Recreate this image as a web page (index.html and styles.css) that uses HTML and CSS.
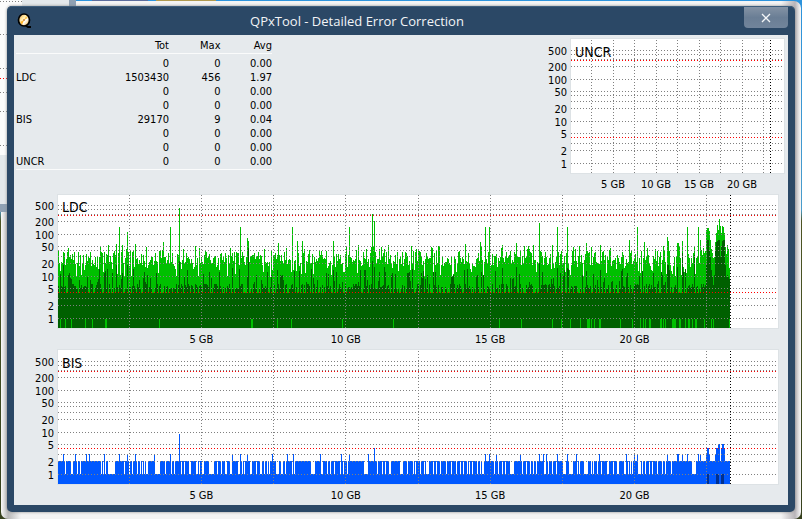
FILE: index.html
```
<!DOCTYPE html>
<html lang="en">
<head>
<meta charset="utf-8">
<title>QPxTool - Detailed Error Correction</title>
<link rel="stylesheet" href="styles.css">
</head>
<body>
<div class="backdrop" aria-hidden="true">
  <svg width="100%" height="212">
    <rect class="white" x="0" y="0" width="8" height="155"/>
    <rect class="white" x="0" y="0" width="23" height="7"/>
    <path class="back-grid" d="M0 1.5H22M0 34.5H8M0 68.5H8M0 92.5H8M0 111.5H8M0 145.5H8"/>
    <path class="back-limit" d="M0 78.5H8"/>
    <rect class="panel" x="22" y="0" width="47" height="7"/>
    <rect class="panel" x="0" y="155" width="8" height="49"/>
    <rect class="edge" x="69" y="0" width="7" height="7"/>
    <rect class="edge" x="0" y="204" width="8" height="8"/>
    <rect fill="#5c6c9c" x="92" y="0" width="56" height="1"/>
    <rect fill="#b09a50" x="156" y="0" width="60" height="1"/>
  </svg>
</div>
<div class="halo">
<main class="window">
  <header class="titlebar">
    <svg class="logo" width="16" height="16" viewBox="0 0 16 16" role="img" aria-label="QPxTool">
      <defs><linearGradient id="disc" x1="0" y1="0" x2="1" y2="1"><stop offset="0" stop-color="#d98a3c"/><stop offset=".35" stop-color="#ffe9a0"/><stop offset=".6" stop-color="#ffffff"/><stop offset="1" stop-color="#f2a000"/></linearGradient></defs>
      <path d="M8 12 L11 14 L14 14" fill="none" stroke="#000" stroke-width="2"/>
      <ellipse cx="7" cy="7" rx="5.500" ry="6" fill="url(#disc)" stroke="#000" stroke-width="1.700"/>
      <path d="M7 7 L3 9 L5 12 Z" fill="#ffb52c"/>
      <path d="M7 7 L9 3 L11 5 Z" fill="#ffc850"/>
      <circle cx="7" cy="7" r="1" fill="#cf8a48"/>
    </svg>
    <h1>QPxTool - Detailed Error Correction</h1>
    <button class="close" type="button" aria-label="Close"><svg width="10" height="10" viewBox="0 0 10 10"><path d="M1 1 L9 9 M9 1 L1 9" fill="none" stroke="#f4f6f8" stroke-width="1.300"/></svg></button>
  </header>
  <div class="client">
    <div class="summary">
      <table>
        <thead><tr><th class="name"></th><th>Tot</th><th>Max</th><th>Avg</th></tr></thead>
        <tbody>
          <tr><td></td><td>0</td><td>0</td><td>0.00</td></tr>
          <tr><td>LDC</td><td>1503430</td><td>456</td><td>1.97</td></tr>
          <tr><td></td><td>0</td><td>0</td><td>0.00</td></tr>
          <tr><td></td><td>0</td><td>0</td><td>0.00</td></tr>
          <tr><td>BIS</td><td>29170</td><td>9</td><td>0.04</td></tr>
          <tr><td></td><td>0</td><td>0</td><td>0.00</td></tr>
          <tr><td></td><td>0</td><td>0</td><td>0.00</td></tr>
          <tr><td>UNCR</td><td>0</td><td>0</td><td>0.00</td></tr>
        </tbody>
      </table>
      <section class="chart small" data-name="UNCR"></section>
    </div>
    <section class="chart" data-name="LDC"></section>
    <section class="chart" data-name="BIS"></section>
  </div>
</main>
</div>
<script src="charts.js"></script>
</body>
</html>
```
FILE: styles.css
```
* { box-sizing: border-box; }
body {
  margin: 0;
  min-height: 100vh;
  padding: 1px 1px 0 1px;
  background: linear-gradient(#2c93dc 0, #4a9cca 210px, #4d5423 221px, #414d22 360px, #36401d 100%);
  font-family: "DejaVu Sans Condensed", "Noto Sans", sans-serif;
  font-size: 11px;
  line-height: 14px;
  color: #000;
}
.backdrop { position: absolute; inset: 0 0 auto 0; z-index: 2; height: 212px; pointer-events: none; }
.backdrop svg { display: block; }
.halo {
  padding: 5px 6px 7px 6px;
  border-radius: 7px;
  background: linear-gradient(90deg, #fafafa 0, #b8b8b8 7px, #f4f4f4 20px, #f4f4f4 calc(100% - 20px), #b8b4b8 calc(100% - 6px), #fafafa 100%);
}
.window {
  position: relative;
  z-index: 3;
  padding: 0 7px 7px;
  border-radius: 5px;
  background: #2b4866;
  box-shadow: inset 0 1px #3d5d7c, 0 0 3px #888;
}
.titlebar { display: grid; grid-template-columns: 26px 1fr 70px 44px; height: 29px; }
.logo { margin: 7px 0 0 3px; }
h1 {
  margin: 0;
  font: 13px/30px "Open Sans", "Noto Sans", sans-serif;
  color: #f2f4f6;
  text-align: center;
}
.close {
  grid-column: 4;
  display: flex;
  align-items: center;
  justify-content: center;
  height: 21px;
  margin-top: 1px;
  padding: 0;
  border: 0;
  border-radius: 0 0 4px 4px;
  background: linear-gradient(#8493a5, #6a7e95 50%, #71849b);
}
.client { padding: 3px 3px 0 2px; background: #e6eaed; }
.summary { display: flex; justify-content: space-between; align-items: flex-start; height: 156px; }
table { border-collapse: separate; border-spacing: 0; width: 256px; table-layout: fixed; }
th, td { height: 14px; padding: 0; font-weight: 400; text-align: right; }
th.name { width: 54px; }
th:nth-child(2) { width: 99px; }
td:first-child { text-align: left; }
thead th { height: 16px; border-bottom: 1px solid #fafbfb; }
tbody tr:first-child td { height: 17px; padding-top: 3px; }
tbody tr:last-child td { height: 15px; border-bottom: 1px solid #fafbfb; }
.chart { display: grid; grid-template-columns: 41px 1fr; align-content: start; margin-right: 6px; height: 156px; }
.chart[data-name="LDC"] { height: 155px; }
.chart.small { grid-template-columns: 24px 1fr; flex: 0 1 239px; margin-right: 0; height: auto; }
.axis { display: block; width: 100%; height: 135px; overflow: visible; text-anchor: end; }
.frame { border: 1px solid #dde2e5; background: #fff; }
.frame svg { display: block; width: 100%; height: 134px; overflow: hidden; }
.chart[data-name="LDC"] .frame svg { height: 133px; }
.ticks { grid-column: 2; display: flex; margin-top: 4px; }
.ticks span { flex: 0 0 20%; text-align: center; white-space: nowrap; }
.ticks span:first-child { margin-left: 10%; }
.name-label { font-size: 14px; }
.white { fill: #fcfcfc; }
.panel { fill: #e3e8eb; }
.edge { fill: #8fa1b4; }
.back-grid { stroke: #808080; stroke-dasharray: 1 2; }
.back-limit { stroke: #ff0000; stroke-dasharray: 1 2; }
.grid { fill: #808080; }
.limit { fill: #ff0000; }
.end { fill: #000; }
.green { fill: #00c000; }
.dark-green { fill: #006000; }
.blue { fill: #0058ff; }
.navy { fill: #003090; }
```
FILE: charts.js
```
const DISC_END = 672;
const LEVELS = [[500, 11], [400, 15], [300, 20], [200, 27], [100, 40], [50, 52], [40, 56], [30, 62],
  [20, 69], [10, 82], [5, 94], [3, 104], [2, 111], [1, 124]];
const LABELLED = [500, 200, 100, 50, 20, 10, 5, 2, 1];

let seed = 7231;
function random() {
  seed = (seed * 1103515245 + 12345) % 2147483648;
  return seed / 2147483648;
}

function bars(heights, cls) {
  let d = '';
  heights.forEach((top, x) => { d += `M${x} 134V${top}h1V134z`; });
  return `<path class="${cls}" d="${d}"/>`;
}

// One-pixel dots, three pixels apart
function dottedRow(y, width) {
  let d = '';
  for (let x = 0; x < width; x += 3) d += `M${x} ${y}h1v1h-1z`;
  return d;
}

function dottedColumn(x) {
  let d = '';
  for (let y = 1; y < 134; y += 3) d += `M${x} ${y}h1v1h-1z`;
  return d;
}

function expand(text) {
  const out = [];
  text.split(' ').forEach(part => {
    const [a, b] = part.split('-').map(Number);
    for (let x = a; x <= (b || a); x++) out.push(x);
  });
  return out;
}

function ldc() {
  const light = [], dark = [];
  for (let x = 0; x < DISC_END; x++) {
    const r = random();
    light.push(Math.round(r < .2 ? 66 + random() * 16 : r < .9 ? 56 + random() * 15 : 50 + random() * 7));
    const q = random();
    dark.push(q < .3 ? 98 : q < .8 ? 89 + Math.floor(random() * 6) : 74 + Math.floor(random() * 14));
  }
  // Peaks as [pixel column, top]
  [[58,49],[61,32],[64,50],[69,37],[77,49],[105,47],[112,32],[121,13],[182,32],[189,43],[190,46],
   [220,48],[234,32],[239,46],[244,46],[275,46],[291,32],[314,19],[316,26],[330,50],[380,51],[407,49],
   [422,47],[427,32],[431,32],[444,50],[458,48],[470,51],[481,28],[499,32],[509,32],[528,48],[571,45],
   [579,32],[586,47],[609,42],[610,46],[619,48],[620,48],[624,46],[629,32],[640,32],[642,45],[643,55],
   [645,53]].forEach(([x, y]) => { light[x] = y; });
  [[5,70],[11,78],[58,70],[64,78],[69,70],[121,66],[174,73],[190,53],[275,75],[314,66],[316,72],
   [326,72],[444,73],[458,72],[481,68],[499,73],[509,73],[609,70],[610,70],[619,72],[624,58],[636,60]]
    .forEach(([x, y]) => { dark[x] = y; });
  // Error burst next to the end of the disc
  [35,33,33,36,45,54,58,63,62,47,38,30,35,24,31,38,31,32,38,52,59,50,54,73]
    .forEach((y, i) => { light[648 + i] = y; });
  [70,45,45,55,62,75,82,90,80,55,47,46,45,45,62,52,46,45,45,70,82,80,82,84]
    .forEach((y, i) => { dark[648 + i] = y; });
  let d = '';
  expand('2 7 13 27 34 47-48 101 193-194 219 233 284 335 441 463 494 503 512 522 529-531 533 536 541-542 562 574 582 585 587 591-592 602-603 605 607 614-617 621-622 627 630-631 634 637-638 646 653 655 671')
    .forEach(x => { d += `M${x} 125h1V134h-1z`; });
  const shift = tops => tops.map(y => y + 1);
  return bars(shift(light), 'green') + bars(shift(dark), 'dark-green') + `<path class="green" d="${d}"/>`;
}

function bis() {
  const tops = new Array(DISC_END).fill(111);
  expand('7 13-14 19 22 43 45 47 50-56 66 71 74 79 82 84 86 88-89 97-101 107 113 116 123 126 131-132 138-139 141 144-145 151-155 159 163 167-168 172-174 180-181 184 186 192-193 198 202-203 206 209 211 218-220 223-224 227 234 236 253-256 263 264 269 272 276 282 285 289 306-309 319 324 327 331-332 342-344 349 355 357 362 366 368-370 375 378 382 388 393 398 402 405 409 411 414 419 422 424-425 436 440 444 447 452-455 464 468 472 475 478 486-487 490 494 498 505-507 511-514 519 521 526-529 533 535 539 543 549 550 555 559 560 566-568 570 572 574 580-582 584 587 591 594 599 604 607 613 634-637')
    .forEach(x => { tops[x] = 124; });
  expand('5 17 28 31 46 61 69 77 96 112 174 182 189 214 229 235 262 283 291 310 427 431 438 462 481 485 488 499 509 518 541 568 576 579 609 619-620 624 629 640 642 648 651 657')
    .forEach(x => { tops[x] = 104; });
  expand('316 649-650 658-659 663 666').forEach(x => { tops[x] = 98; });
  expand('660-661 664-665').forEach(x => { tops[x] = 94; });
  tops[121] = 84;
  let d = '';
  expand('649-650 658-660 663-665').forEach(x => { d += `M${x} 124h1V134h-1z`; });
  return bars(tops, 'blue') + `<path class="navy" d="${d}"/>`;
}

const SERIES = { LDC: ldc, BIS: bis, UNCR: () => '' };

document.querySelectorAll('.chart').forEach(el => {
  const name = el.dataset.name;
  const small = el.classList.contains('small');
  const width = small ? 213 : 720;
  const top = name === 'LDC' ? 1 : 0;
  const columns = small ? [20, 42, 63, 85, 106, 128, 149, 171, 192] : [71, 143, 215, 287, 360, 432, 504, 576, 648];
  const end = small ? 199 : DISC_END;
  const rows = LEVELS.map(([, y]) => dottedRow(y, width)).join('');
  const cols = columns.map(dottedColumn).join('');
  const labels = LABELLED.map(v => {
    const y = LEVELS.find(l => l[0] === v)[1];
    return `<text x="100%" dx="-3" y="${y + 6 - top}">${v}</text>`;
  }).join('');
  el.innerHTML = `<svg class="axis">${labels}</svg>
    <div class="frame"><svg viewBox="0 ${top} ${width} ${134 - top}" preserveAspectRatio="none" shape-rendering="crispEdges" role="img" aria-label="${name}">
      ${SERIES[name]()}
      <path class="grid" d="${rows}${cols}"/>
      <path class="limit" d="${dottedRow(21, width)}${dottedRow(98, width)}"/>
      <path class="end" d="${dottedColumn(end)}"/>
      <text class="name-label" x="4" y="18">${name}</text>
    </svg></div>
    <div class="ticks"><span>5 GB</span><span>10 GB</span><span>15 GB</span><span>20 GB</span></div>`;
});
```
